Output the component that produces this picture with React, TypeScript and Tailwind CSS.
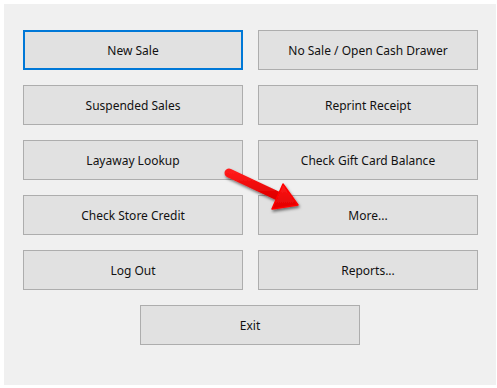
const leftButtons = ['New Sale', 'Suspended Sales', 'Layaway Lookup', 'Check Store Credit', 'Log Out'];
const rightButtons = ['No Sale / Open Cash Drawer', 'Reprint Receipt', 'Check Gift Card Balance', 'More...', 'Reports...'];

function PosButton({ label, focused }: { label: string; focused?: boolean }) {
    return (
        <button
            className={
                focused
                    ? 'h-[40px] w-[220px] pt-[2px] bg-[#e1e1e1] border-2 border-[#0078d7] text-[12px] text-[#111]'
                    : 'h-[40px] w-[220px] pt-[2px] bg-[#e1e1e1] border border-[#adadad] text-[12px] text-[#111]'
            }
        >
            {label}
        </button>
    );
}

function RedArrow() {
    return (
        <svg className="absolute left-[218px] top-[162px]" width="86" height="52" viewBox="0 0 86 52">
            <defs>
                <linearGradient id="arrowFill" x1="0" y1="0" x2="0" y2="1">
                    <stop offset="0" stopColor="#ff1a1a" />
                    <stop offset="1" stopColor="#e00000" />
                </linearGradient>
                <filter id="arrowShadow" x="-20%" y="-20%" width="140%" height="150%">
                    <feDropShadow dx="1" dy="2" stdDeviation="1.4" floodColor="#000" floodOpacity="0.55" />
                </filter>
            </defs>
            <g filter="url(#arrowShadow)">
                <line x1="11" y1="11" x2="62" y2="35" stroke="url(#arrowFill)" strokeWidth="9" strokeLinecap="round" />
                <polygon points="54,47 65,22 80,43" fill="url(#arrowFill)" strokeLinejoin="round" stroke="#f00" strokeWidth="1.5" />
            </g>
        </svg>
    );
}

export default function App() {
    return (
        <div className="relative w-[497px] h-[388px] bg-white p-[4px] pr-[1px] pb-[3px]" style={{ fontFamily: '"Segoe UI", "Noto Sans", sans-serif' }}>
            <div className="w-full h-full bg-[#f0f0f0] pt-[26px] pl-[19px]">
                <div className="w-[455px] flex flex-col gap-[15px]">
                    <div className="grid grid-cols-[220px_220px] gap-x-[15px] gap-y-[15px]">
                        {leftButtons.map((label, i) => (
                            <div key={label} className="contents">
                                <PosButton label={label} focused={i === 0} />
                                <PosButton label={rightButtons[i]} />
                            </div>
                        ))}
                    </div>
                    <div className="flex pl-[117px]">
                        <PosButton label="Exit" />
                    </div>
                </div>
            </div>
            <RedArrow />
        </div>
    );
}
